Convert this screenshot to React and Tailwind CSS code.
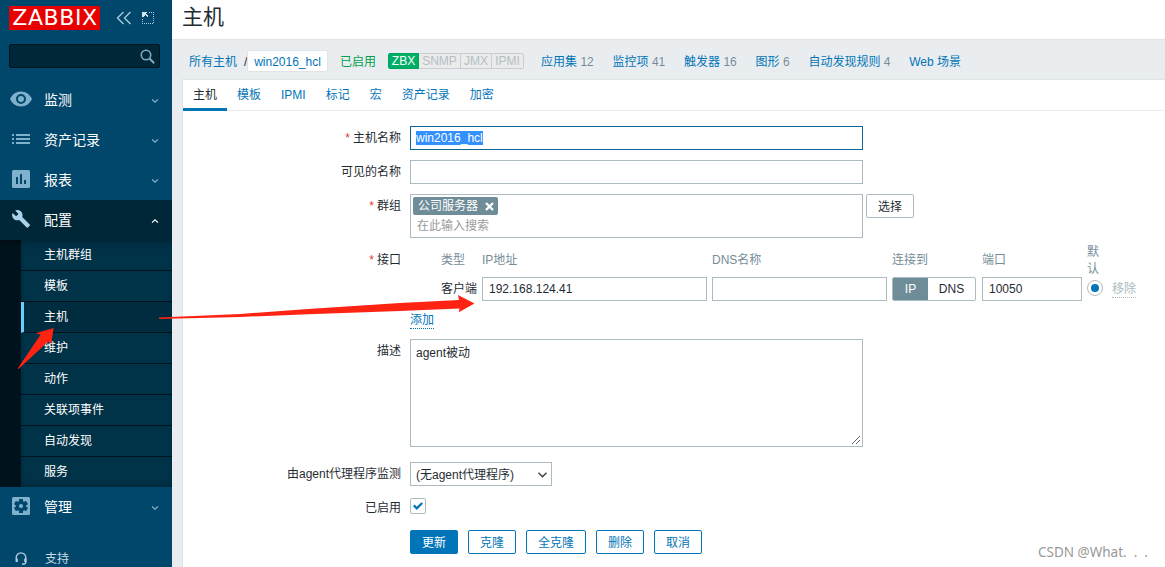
import React from 'react';

const FONT = "font-['Liberation_Sans','Noto_Sans_CJK_SC',sans-serif]";

function Chevron({ up }) {
  return (
    <svg width="8" height="6" viewBox="0 0 8 6" fill="none" stroke={up ? '#ffffff' : '#8fb6cc'} strokeWidth="1.2" className="mr-[13px] mt-[2px]">
      <path d={up ? 'M1 4.6 4 1.8 7 4.6' : 'M1 1.4 4 4.2 7 1.4'} />
    </svg>
  );
}

const icons = {
  eye: (
    <svg width="22" height="16" viewBox="0 0 22 16">
      <path fill="#7fb1cd" fillRule="evenodd" d="M11 .5C6 .5 1.900 3.500 0 8c1.900 4.500 6 7.500 11 7.500s9.100-3 11-7.500C20.100 3.500 16 .5 11 .5zM11 13a5 5 0 1 1 0-10 5 5 0 0 1 0 10zm0-2a3 3 0 1 0 0-6 3 3 0 0 0 0 6z" />
    </svg>
  ),
  list: (
    <svg width="18" height="12" viewBox="0 0 18 12" fill="#7fb1cd" shapeRendering="crispEdges">
      <path d="M0 1h2v2H0zM4 1h14v2H4zM0 5h2v2H0zM4 5h14v2H4zM0 9h2v2H0zM4 9h14v2H4z" />
    </svg>
  ),
  chart: (
    <svg width="18" height="18" viewBox="0 0 18 18">
      <rect width="18" height="18" rx="1.500" fill="#7fb1cd" />
      <path fill="#01466b" d="M4 7h2v7H4zM8 4h2v10H8zM12 10h2v4h-2z" />
    </svg>
  ),
  wrench: (
    <svg width="18" height="18" viewBox="0 0 18 18">
      <path fill="#a9d3ea" d="M17.700 14.600 10.200 7.100c.7-1.900.3-4.100-1.200-5.600C7.400-.1 5-.4 3.100.5l3.400 3.400-2.400 2.400L.6 2.900C-.3 4.800.1 7.200 1.600 8.800c1.500 1.500 3.700 1.900 5.600 1.200l7.500 7.500c.3.3.8.3 1.200 0l1.800-1.800c.4-.3.4-.8 0-1.100z" />
    </svg>
  ),
  gear: (
    <svg width="18" height="18" viewBox="0 0 18 18">
      <rect width="18" height="18" rx="1.500" fill="#7fb1cd" />
      <g fill="#01466b">
        <circle cx="9" cy="9" r="5.200" />
        <rect x="7" y="2" width="4" height="14" rx=".5" />
        <rect x="7" y="2" width="4" height="14" rx=".5" transform="rotate(60 9 9)" />
        <rect x="7" y="2" width="4" height="14" rx=".5" transform="rotate(120 9 9)" />
      </g>
      <circle cx="9" cy="9" r="2.100" fill="#7fb1cd" />
    </svg>
  ),
};

function MenuItem({ icon, label, open }) {
  return (
    <div className={'flex h-10 shrink-0 items-center text-[14px] leading-5 text-white ' + (open ? 'bg-[#002737]' : '')}>
      <span className="flex w-[42px] justify-center pb-[2px]">{icons[icon]}</span>
      <span className="ml-[2px] flex-1">{label}</span>
      <Chevron up={open} />
    </div>
  );
}

const subItems = ['主机群组', '模板', '主机', '维护', '动作', '关联项事件', '自动发现', '服务'];

function Sidebar() {
  return (
    <aside className="flex h-[567px] w-[172px] shrink-0 flex-col overflow-hidden bg-[#01466b]">
      <div className="flex h-[44px] shrink-0 items-start pl-[9px] pt-[6px]">
        <div className="flex h-6 w-[91px] items-center justify-center bg-[#e80000] pl-px font-['DejaVu_Sans',sans-serif] text-[22px] leading-6 tracking-[0.6px] text-white">
          ZABBIX
        </div>
        <svg width="16" height="14" viewBox="0 0 16 14" className="ml-4 mt-[5px]" fill="none" stroke="#a9cbdc" strokeWidth="1.400">
          <path d="M7.500 1 1.500 7l6 6M14.500 1l-6 6 6 6" />
        </svg>
        <svg width="12" height="12" viewBox="0 0 12 12" className="ml-[10px] mt-[6px]" shapeRendering="crispEdges" fill="#a9cbdc">
          <path d="M7 0h1v1H7zM9 0h1v1H9zM11 0h1v1h-1zM11 2h1v1h-1zM11 4h1v1h-1zM11 6h1v1h-1zM11 8h1v1h-1zM11 10h1v1h-1zM0 7h1v1H0zM0 9h1v1H0zM0 11h1v1H0zM2 11h1v1H2zM4 11h1v1H4zM6 11h1v1H6zM8 11h1v1H8zM10 11h1v1h-1z" />
          <path d="M0 0h5v1H4v1h1v1h1v1h1v2H6V5H5V4H4V3H3v1H2v1H0z" fill="#d3e5ee" transform="scale(.92)" />
        </svg>
      </div>
      <div className="ml-[9px] flex h-6 w-[151px] shrink-0 items-center justify-end rounded-[2px] border border-[#00141e] bg-[#002737] pr-1">
        <svg width="15" height="15" viewBox="0 0 15 15" fill="none" stroke="#7fa9c0" strokeWidth="1.600">
          <circle cx="6" cy="6" r="4.700" />
          <path d="m9.500 9.500 4.700 4.700" strokeWidth="2" />
        </svg>
      </div>
      <nav className="mt-3 flex shrink-0 flex-col">
        <MenuItem icon="eye" label="监测" />
        <MenuItem icon="list" label="资产记录" />
        <MenuItem icon="chart" label="报表" />
        <MenuItem icon="wrench" label="配置" open />
        <div className="flex h-[247px] bg-[#00131d] pl-[21px] shadow-[inset_0_6px_6px_-5px_#000a10]">
          <ul className="flex-1 bg-[#003248] shadow-[inset_0_6px_7px_-5px_#001f2d,inset_0_-5px_6px_-5px_#001f2d]">
            {subItems.map((t, i) => (
              <li
                key={i}
                className={
                  'flex h-[31px] items-center text-[12px] leading-4 text-white ' +
                  (i === 2 ? 'border-l-[3px] border-l-[#67d0ff] bg-[#002c40] pl-5 ' : 'pl-[23px] ') +
                  (i < 7 ? 'border-b border-b-[#00131d]' : 'pb-px')
                }
              >
                {t}
              </li>
            ))}
          </ul>
        </div>
        <MenuItem icon="gear" label="管理" />
      </nav>
      <div className="mt-[21px] flex h-5 shrink-0 items-center pl-[15px] text-[12px] leading-5 text-[#c9dbe5]">
        <svg width="12" height="13" viewBox="0 0 12 13" className="mr-[18px]" fill="none" stroke="#b5cfdd" strokeWidth="1.300">
          <path d="M1.200 7V5.600a4.800 4.800 0 0 1 9.600 0V10c0 1.500-.8 2-2 2H7" />
          <path d="M1.700 6.500v3.500M10.300 6.500v3.500" strokeWidth="2.200" />
        </svg>
        <span className="pt-[2px]">支持</span>
      </div>
    </aside>
  );
}

function NavBar() {
  const links = [['应用集', '12'], ['监控项', '41'], ['触发器', '16'], ['图形', '6'], ['自动发现规则', '4'], ['Web 场景', '']];
  return (
    <div className="flex h-[39px] items-center pb-px pl-[17px] pt-1 leading-5 text-[#0275b8]">
      <span className="pt-[2px]">所有主机</span>
      <span className="ml-[7px] w-[3px] pt-px text-[#1f2c33]">/</span>
      <span className="flex h-[22px] w-[81px] items-center justify-center rounded-[2px] border border-[#dfe4e7] bg-white pt-px">win2016_hcl</span>
      <span className="ml-3 w-12 pt-[2px] text-[#009f4d]">已启用</span>
      <span className="flex h-4 w-[136px] text-[12px] leading-[15px] text-[#b3bfc5]">
        <span className="w-[31px] rounded-l-[2px] border border-[#00a35c] bg-[#00af66] text-center text-white">ZBX</span>
        <span className="w-[42px] border-y border-r border-[#c9ced1] bg-[#ebebeb] text-center">SNMP</span>
        <span className="w-[31px] border-y border-r border-[#c9ced1] bg-[#ebebeb] text-center">JMX</span>
        <span className="w-8 rounded-r-[2px] border-y border-r border-[#c9ced1] bg-[#ebebeb] text-center">IPMI</span>
      </span>
      <span className="ml-[17px] flex gap-[18.800px] whitespace-nowrap pt-[2px]">
        {links.map(([t, n]) => (
          <span key={t}>
            {t}
            {n && <span className="text-[#768d99]"> {n}</span>}
          </span>
        ))}
      </span>
    </div>
  );
}

function Row({ label, required, children, className, labelClass = 'h-6' }) {
  return (
    <div className={'flex items-start ' + className}>
      <div className={'mr-[9px] flex w-[218px] shrink-0 items-center justify-end leading-5 ' + labelClass}>
        {required && <span className="mr-[3px] text-[#e33734]">*</span>}
        {label}
      </div>
      {children}
    </div>
  );
}

function Button({ children, primary, wide }) {
  return (
    <button
      className={
        'flex h-6 items-center justify-center rounded-[2px] border border-[#0275b8] pt-[2px] leading-5 ' +
        (primary ? 'bg-[#0275b8] text-white ' : 'bg-white text-[#0275b8] ') +
        (wide ? 'w-[60px]' : 'w-12')
      }
    >
      {children}
    </button>
  );
}

const field = 'flex h-6 items-center border border-[#acbbc2] bg-white leading-5';

function Interfaces() {
  return (
    <div className="w-[740px]">
      <div className="flex h-[33px] items-center leading-[17px] text-[#768d99]">
        <span className="ml-[31px] w-[41px]">类型</span>
        <span className="w-[230px]">IP地址</span>
        <span className="w-[180px]">DNS名称</span>
        <span className="w-[90px]">连接到</span>
        <span className="w-[105px]">端口</span>
        <span className="w-3">默认</span>
      </div>
      <div className="flex items-center">
        <span className="ml-[31px] w-[41px] leading-5">客户端</span>
        <div className={field + ' mr-[5px] w-[225px] pl-[6px]'}>192.168.124.41</div>
        <div className={field + ' mr-[5px] w-[175px]'} />
        <div className="mr-[6px] flex h-6 w-[84px] overflow-hidden rounded-[2px] border border-[#acbbc2] leading-[22px]">
          <span className="w-[35px] bg-[#6f8d98] text-center text-white">IP</span>
          <span className="flex-1 text-center">DNS</span>
        </div>
        <div className={field + ' mr-[5px] w-[100px] pl-[6px]'}>10050</div>
        <div className="mb-[2px] flex size-4 items-center justify-center rounded-full border border-[#acbbc2]">
          <span className="size-2 rounded-full bg-[#0275b8]" />
        </div>
        <span className="ml-[9px] border-b border-dotted border-[#acbbc2] leading-4 text-[#acbbc2]">移除</span>
      </div>
      <div className="mt-[11px] flex h-[17px]">
        <span className="h-[17px] border-b border-dotted border-[#0275b8] leading-[17px] text-[#0275b8]">添加</span>
      </div>
    </div>
  );
}

function HostForm() {
  return (
    <div className="pt-[15px]">
      <Row label="主机名称" required className="h-[34px]">
        <div className="flex h-6 w-[453px] items-center border border-[#0c6797] pl-[5px] leading-5">
          <span className="bg-[#3390ff] leading-[14px] text-white">win2016_hcl</span>
        </div>
      </Row>
      <Row label="可见的名称" className="h-[34px]">
        <div className={field + ' w-[453px]'} />
      </Row>
      <Row label="群组" required className="h-[50px]">
        <div className="h-11 w-[453px] border border-[#acbbc2] pl-[2px] pt-[2px]">
          <div className="flex h-[18px] w-[85px] items-center rounded-[2px] bg-[#6f8d98] pl-[5px] text-white">
            公司服务器
            <svg width="9" height="9" viewBox="0 0 9 9" className="ml-[7px]" stroke="#ffffff" strokeWidth="2.300">
              <path d="m1 1 7 7M8 1 1 8" />
            </svg>
          </div>
          <div className="pl-[4px] pt-[3px] leading-[17px] text-[#9a9a9a]">在此输入搜索</div>
        </div>
        <button className="ml-[3px] flex h-6 w-12 items-center justify-center rounded-[2px] border border-[#acbbc2] pt-[2px] leading-5">选择</button>
      </Row>
      <Row label="接口" required className="h-[95px]" labelClass="h-[31px]">
        <Interfaces />
      </Row>
      <Row label="描述" className="h-[123px]">
        <div className="flex h-[108px] w-[453px] flex-col justify-between border border-[#acbbc2] pl-[5px] pt-[3px] leading-5">
          agent被动
          <svg width="10" height="10" viewBox="0 0 10 10" className="mb-px mr-px self-end" stroke="#555" strokeWidth=".9">
            <path d="M1 9 9 1M5 9l4-4" />
          </svg>
        </div>
      </Row>
      <Row label="由agent代理程序监测" className="h-9">
        <div className={field + ' w-[142px] justify-between pl-[5px] pr-1 pt-px'}>
          (无agent代理程序)
          <svg width="9" height="6" viewBox="0 0 9 6" fill="none" stroke="#333f45" strokeWidth="1.400">
            <path d="m.5.700 4 4 4-4" />
          </svg>
        </div>
      </Row>
      <Row label="已启用" className="h-8" labelClass="h-[19px]">
        <div className="flex size-4 items-center justify-center rounded-[2px] border border-[#acbbc2]">
          <svg width="10" height="8" viewBox="0 0 10 8" fill="none" stroke="#0275b8" strokeWidth="2.200">
            <path d="m.8 3.400 3 3L9.200 1" />
          </svg>
        </div>
      </Row>
      <div className="flex gap-[10px] pl-[227px]">
        <Button primary>更新</Button>
        <Button>克隆</Button>
        <Button wide>全克隆</Button>
        <Button>删除</Button>
        <Button>取消</Button>
      </div>
    </div>
  );
}

export default function App() {
  const tabs = ['主机', '模板', 'IPMI', '标记', '宏', '资产记录', '加密'];
  return (
    <div className={'relative flex h-[567px] w-[1165px] overflow-hidden bg-[#e9edf0] text-[12px] leading-5 text-[#1f2c33] ' + FONT}>
      <Sidebar />
      <main className="flex min-w-0 flex-1 flex-col">
        <header className="h-10 shrink-0 border-b border-[#dfe4e7] bg-white pl-[10px] text-[21px] leading-[33px]">主机</header>
        <NavBar />
        <section className="ml-[10px] flex-1 border-l border-t border-[#dfe4e7] bg-white">
          <div className="flex h-[31px] border-b border-[#ebeef0]">
            {tabs.map((t, i) => (
              <span
                key={t}
                className={'h-[31px] px-[10px] leading-[31px] ' + (i === 0 ? 'border-b-[3px] border-[#0275b8]' : 'text-[#0275b8]')}
              >
                {t}
              </span>
            ))}
          </div>
          <HostForm />
        </section>
      </main>
      <svg width="1165" height="567" viewBox="0 0 1165 567" className="pointer-events-none absolute inset-0" fill="#ff2314">
        <path d="M17.700 368.500 40.700 334.500 35.700 333.300 53.600 328 51.200 344 48.300 341.500 18.500 369z" />
        <path d="M159 317.500 240 314 308 309 400 303 459 300 458 295 474.500 303.500 458.800 312.300 459.500 308.500 400 311 308 314.300 240 317 159 319z" />
      </svg>
      <div className="absolute left-[1038px] top-[542px] whitespace-nowrap font-['Noto_Sans','Noto_Sans_CJK_SC',sans-serif] text-[13.500px] leading-5 text-[#999999]">
        CSDN @What<span className="tracking-[7px]">...</span>
      </div>
    </div>
  );
}
